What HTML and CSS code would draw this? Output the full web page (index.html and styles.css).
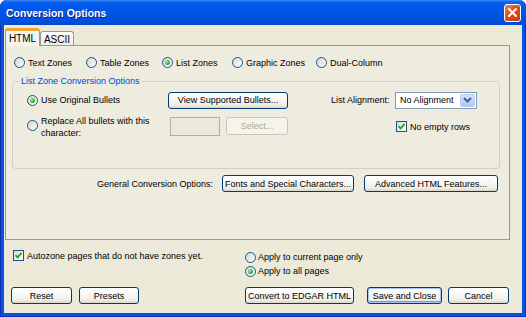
FILE: index.html
```html
<!DOCTYPE html>
<html lang="en">
<head>
    <meta charset="UTF-8">
    <title>Conversion Options</title>
    <link rel="stylesheet" href="styles.css">
</head>
<body>
<div class="window">
    <div class="titlebar">
        <span class="title">Conversion Options</span>
        <span class="close">
            <svg width="11" height="11" viewBox="0 0 11 11"><path d="M2 2 L9 9 M9 2 L2 9" stroke="#fff" stroke-width="2" stroke-linecap="round"/></svg>
        </span>
    </div>
    <div class="client">
        <div class="tabs">
            <div class="tab active">HTML</div>
            <div class="tab ascii">ASCII</div>
        </div>
        <div class="panel">
            <div class="zones">
                <label class="opt"><span class="radio"></span>Text Zones</label>
                <label class="opt"><span class="radio"></span>Table Zones</label>
                <label class="opt"><span class="radio on"></span>List Zones</label>
                <label class="opt"><span class="radio"></span>Graphic Zones</label>
                <label class="opt"><span class="radio"></span>Dual-Column</label>
            </div>
            <div class="group">
                <div class="group-title">List Zone Conversion Options</div>
                <div class="group-grid">
                    <label class="opt"><span class="radio on"></span>Use Original Bullets</label>
                    <button class="btn">View Supported Bullets...</button>
                    <span></span>
                    <span class="lbl">List Alignment:</span>
                    <div class="select">No Alignment
                        <span class="arrow"><svg width="9" height="6" viewBox="0 0 9 6"><path d="M1 1 L4.5 4.5 L8 1" fill="none" stroke="#4d6185" stroke-width="2"/></svg></span>
                    </div>
                    <label class="opt two"><span class="radio"></span><span>Replace All bullets with this<br>character:</span></label>
                    <div class="char-row">
                        <span class="textbox"></span>
                        <button class="btn disabled sel">Select...</button>
                    </div>
                    <span></span>
                    <span></span>
                    <label class="opt empty"><span class="check"><svg width="9" height="9" viewBox="0 0 9 9"><path d="M1.5 4.2 L3.6 6.4 L7.6 1.8" fill="none" stroke="#21a121" stroke-width="1.8"/></svg></span>No empty rows</label>
                </div>
            </div>
            <div class="general">
                <span>General Conversion Options:</span>
                <button class="btn fonts">Fonts and Special Characters...</button>
                <button class="btn adv">Advanced HTML Features...</button>
            </div>
        </div>
        <div class="options">
            <label class="opt auto"><span class="check"><svg width="9" height="9" viewBox="0 0 9 9"><path d="M1.5 4.2 L3.6 6.4 L7.6 1.8" fill="none" stroke="#21a121" stroke-width="1.8"/></svg></span>Autozone pages that do not have zones yet.</label>
            <div class="apply">
                <label class="opt"><span class="radio"></span>Apply to current page only</label>
                <label class="opt"><span class="radio on"></span>Apply to all pages</label>
            </div>
        </div>
        <div class="actions">
            <button class="btn reset">Reset</button>
            <button class="btn presets">Presets</button>
            <button class="btn convert">Convert to EDGAR HTML</button>
            <button class="btn default save">Save and Close</button>
            <button class="btn cancel">Cancel</button>
        </div>
    </div>
</div>
</body>
</html>
```

FILE: styles.css
```css
*{
    margin: 0;
    padding: 0;
    box-sizing: border-box;
}
body{
    font: 9px "Liberation Sans", Arial, sans-serif;
    color: #000;
    background: #fff;
}
.window{
    width: 526px;
    height: 317px;
    display: flex;
    flex-direction: column;
    background: #0852e0;
    border-radius: 7px 7px 0 0;
    box-shadow: inset 1px 0 #0a2fb8, inset -1px 0 #0a2fb8, inset 0 -1px #0a2fb8;
    overflow: hidden;
}
.titlebar{
    height: 25px;
    display: flex;
    align-items: center;
    justify-content: space-between;
    padding: 0 5px 0 6px;
    background: linear-gradient(#3d8ff7 0, #0b63f0 2px, #0059ec 6px, #0055e5 13px, #0051de 20px, #0049d2 25px);
}
.title{
    color: #fff;
    font: bold 10.5px "Liberation Sans", Arial, sans-serif;
    text-shadow: 1px 1px #0a1d8a;
}
.close{
    width: 17px;
    height: 18px;
    border: 1px solid #fff;
    border-radius: 3px;
    background: linear-gradient(135deg, #ec8a64, #d9511f 45%, #c23a10);
    display: flex;
    align-items: center;
    justify-content: center;
}
.client{
    flex: 1;
    margin: 0 4px 4px;
    background: #ece9d8;
    display: flex;
    flex-direction: column;
}
.tabs{
    display: flex;
    align-items: flex-end;
    height: 18px;
    margin: 3px 0 -1px 1px;
}
.tab{
    height: 15px;
    width: 34px;
    border: 1px solid #919b9c;
    border-bottom: none;
    border-radius: 3px 3px 0 0;
    background: linear-gradient(#fff, #ecebe6);
    display: flex;
    align-items: center;
    justify-content: center;
    font-size: 10px;
}
.tab.active{
    position: relative;
    z-index: 1;
    height: 18px;
    width: 35px;
    border-top: 3px solid #f0a436;
    background: #f4f3ec;
    padding-bottom: 1px;
}
.panel{
    height: 195px;
    width: 505px;
    margin-left: 1px;
    border: 1px solid #919b9c;
    background: #eeebdf;
    padding: 10px 9px 0 6px;
}
.zones{
    display: grid;
    grid-template-columns: 72px 76px 70px 84px auto;
    height: 13px;
    margin-left: 2px;
}
.opt{
    display: flex;
    align-items: center;
    gap: 3px;
    white-space: nowrap;
}
.radio{
    flex: none;
    width: 11px;
    height: 11px;
    border-radius: 50%;
    border: 1px solid #1c5180;
    background: linear-gradient(135deg, #d6d5cc, #fff);
    display: flex;
    align-items: center;
    justify-content: center;
}
.radio.on::after{
    content: "";
    width: 5px;
    height: 5px;
    border-radius: 50%;
    background: radial-gradient(circle at 35% 35%, #a8f0a6, #2fb42b 55%, #1f9a1d);
}
.check{
    flex: none;
    width: 11px;
    height: 11px;
    border: 1px solid #1c5180;
    background: linear-gradient(135deg, #dcdcd7, #fff);
    display: flex;
    align-items: center;
    justify-content: center;
}
.group{
    height: 88px;
    margin-top: 12px;
    border: 1px solid #d0d0bf;
    border-radius: 4px;
}
.group-title{
    width: fit-content;
    margin: -6px 0 0 6px;
    padding: 0 2px;
    line-height: 11px;
    background: #eeebdf;
    color: #0046d5;
}
.group-grid{
    display: grid;
    grid-template-columns: 141px 120px 43px 64px 82px;
    grid-template-rows: 18px 19px;
    row-gap: 8px;
    margin: 4px 0 0 14px;
    align-items: center;
}
.two{
    line-height: 12px;
    align-items: center;
}
.two .radio{
    margin-top: -2px;
}
.btn{
    height: 17px;
    border: 1px solid #003c74;
    border-radius: 3px;
    background: linear-gradient(#fff 0, #f8f8f5 40%, #efeee8 80%, #d9d4c8 100%);
    font: inherit;
    color: #000;
    display: flex;
    align-items: center;
    justify-content: center;
    white-space: nowrap;
}
.btn.disabled{
    border-color: #c9c7ba;
    background: #f5f4ea;
    color: #aca899;
}
.btn.default{
    box-shadow: inset 0 0 0 1px #a9c4f2, inset 0 -1px 0 1px #7396e6;
}
.char-row{
    display: flex;
    gap: 6px;
    margin-left: 2px;
    height: 19px;
}
.textbox{
    width: 50px;
    height: 19px;
    border: 1px solid #b2afa2;
    background: #ece9d8;
}
.sel{
    width: 62px;
    height: 18px;
}
.select{
    height: 17px;
    border: 1px solid #7f9db9;
    background: #fff;
    display: flex;
    align-items: center;
    justify-content: space-between;
    padding: 0 1px 0 4px;
}
.arrow{
    width: 15px;
    height: 13px;
    border: 1px solid #bccdf4;
    border-radius: 2px;
    background: linear-gradient(#d4e1fd, #b2c7f6);
    display: flex;
    align-items: center;
    justify-content: center;
}
.empty{
    margin-left: 1px;
}
.general{
    display: flex;
    justify-content: flex-end;
    align-items: center;
    margin: 6px 2px 0 0;
}
.fonts{
    width: 132px;
    margin: 0 10px 0 9px;
}
.adv{
    width: 134px;
}
.options{
    display: grid;
    grid-template-columns: 232px 1fr;
    padding-left: 9px;
    margin-top: 9px;
    align-items: start;
}
.auto{
    height: 13px;
}
.apply{
    margin-top: 1px;
}
.apply .opt{
    height: 14px;
    gap: 2px;
}
.actions{
    display: flex;
    margin-top: auto;
    margin-bottom: 9px;
    padding-left: 7px;
}
.reset{
    width: 61px;
}
.presets{
    width: 60px;
    margin-left: 7px;
}
.convert{
    width: 109px;
    margin-left: 106px;
}
.save{
    width: 75px;
    margin-left: 13px;
}
.cancel{
    width: 61px;
    margin-left: 6px;
}
```
